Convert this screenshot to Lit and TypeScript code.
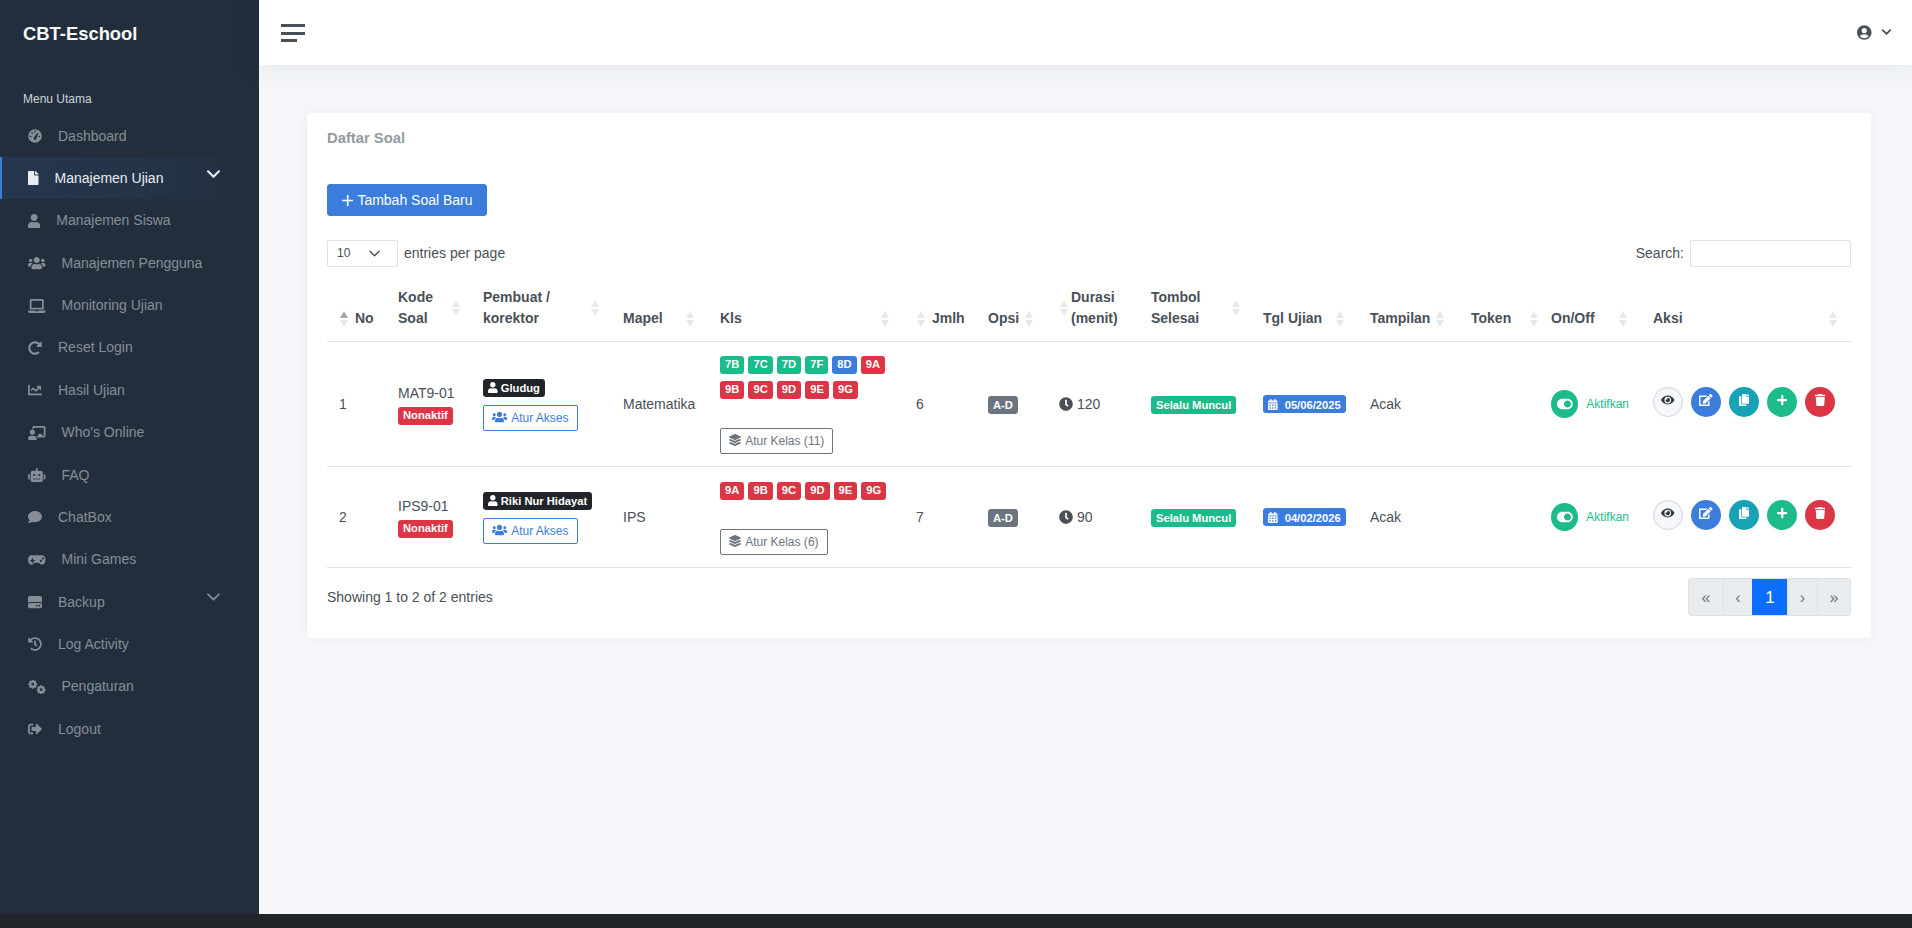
import { LitElement, html, css } from "lit";
import { customElement } from "lit/decorators.js";

const circle = (x: number, y: number, r: number) =>
  `M${x - r} ${y}a${r} ${r} 0 1 0 ${2 * r} 0a${r} ${r} 0 1 0 ${-2 * r} 0z`;

const gear = (cx: number, cy: number, r: number, hole: number) => {
  const pts: string[] = [];
  const teeth = 8;
  for (let i = 0; i < teeth; i++) {
    const a = (i / teeth) * Math.PI * 2;
    const w = Math.PI / teeth;
    [[-w * 0.95, r * 0.76], [-w * 0.45, r], [w * 0.45, r], [w * 0.95, r * 0.76]].forEach(([d, rr]) => {
      pts.push(`${(cx + Math.cos(a + d) * rr).toFixed(1)} ${(cy + Math.sin(a + d) * rr).toFixed(1)}`);
    });
  }
  return `M${pts.join("L")}z${circle(cx, cy, hole)}`;
};

const ICONS: Record<string, [number, string, boolean?]> = {
  gauge: [512, circle(256, 256, 250) + circle(100, 275, 30) + circle(150, 150, 30) + circle(256, 95, 30) + circle(412, 275, 30) + "M205 330L340 140L375 160L295 380A55 55 0 0 1 205 330z", true],
  file: [384, "M224 136V0H24C10.7 0 0 10.7 0 24v464c0 13.3 10.7 24 24 24h336c13.3 0 24-10.7 24-24V160H248c-13.2 0-24-10.8-24-24zm160-14.1v6.1H256V0h6.1c6.4 0 12.5 2.5 17 7l97.9 98c4.5 4.5 7 10.6 7 16.9z"],
  user: [448, "M224 256c70.7 0 128-57.3 128-128S294.7 0 224 0 96 57.3 96 128s57.3 128 128 128zm89.6 32h-16.7c-22.2 10.2-46.9 16-72.9 16s-50.6-5.8-72.9-16h-16.7C60.2 288 0 348.2 0 422.4V464c0 26.5 21.5 48 48 48h352c26.5 0 48-21.5 48-48v-41.6c0-74.2-60.2-134.4-134.4-134.4z"],
  users: [640, "M96 224c35.3 0 64-28.7 64-64s-28.7-64-64-64-64 28.7-64 64 28.7 64 64 64zm448 0c35.3 0 64-28.7 64-64s-28.7-64-64-64-64 28.7-64 64 28.7 64 64 64zm32 32h-64c-17.6 0-33.5 7.1-45.1 18.6 40.3 22.1 68.9 62 75.1 109.4h66c17.7 0 32-14.3 32-32v-32c0-35.3-28.7-64-64-64zm-256 0c61.9 0 112-50.1 112-112S381.9 32 320 32 208 82.1 208 144s50.1 112 112 112zm76.8 32h-8.3c-20.8 10-43.9 16-68.5 16s-47.6-6-68.5-16h-8.3C179.6 288 128 339.6 128 403.2V432c0 26.5 21.5 48 48 48h288c26.5 0 48-21.5 48-48v-28.8c0-63.6-51.6-115.2-115.2-115.2zm-223.7-13.4C161.5 263.1 145.6 256 128 256H64c-35.3 0-64 28.7-64 64v32c0 17.7 14.3 32 32 32h65.9c6.3-47.4 34.9-87.3 75.2-109.4z"],
  laptop: [640, "M624 416H381.54c-.74 19.81-14.71 32-32.74 32H288c-18.69 0-33.02-17.47-32.77-32H16c-8.8 0-16 7.2-16 16v16c0 35.2 28.8 64 64 64h512c35.2 0 64-28.8 64-64v-16c0-8.8-7.2-16-16-16zM576 48c0-26.4-21.6-48-48-48H112C85.6 0 64 21.6 64 48v336h512V48zm-64 272H128V64h384v256z"],
  redo: [512, "M256.455 8c66.269.119 126.437 26.233 170.859 68.685l35.715-35.715C478.149 25.851 504 36.559 504 57.941V192c0 13.255-10.745 24-24 24H345.941c-21.382 0-32.09-25.851-16.971-40.971l41.75-41.75c-30.864-28.899-70.801-44.907-113.23-45.273-92.398-.798-170.283 73.977-169.484 169.442C88.764 348.009 162.184 424 256 424c41.127 0 79.997-14.678 110.629-41.556 4.743-4.161 11.906-3.908 16.368.553l39.662 39.662c4.872 4.872 4.631 12.815-.482 17.433C378.202 479.813 319.926 504 256 504 119.034 504 8.001 392.967 8 256.002 7.999 119.193 119.646 7.755 256.455 8z"],
  chart: [512, "M496 384H64V80c0-8.84-7.16-16-16-16H16C7.16 64 0 71.16 0 80v336c0 17.67 14.33 32 32 32h464c8.84 0 16-7.16 16-16v-32c0-8.84-7.16-16-16-16zM464 96H345.94c-21.38 0-32.09 25.85-16.97 40.97l32.4 32.4L288 242.75l-73.37-73.37c-12.5-12.5-32.76-12.5-45.25 0l-68.69 68.69c-6.25 6.25-6.25 16.38 0 22.63l22.62 22.62c6.25 6.25 16.38 6.25 22.63 0L192 237.25l73.37 73.37c12.5 12.5 32.76 12.5 45.25 0l96-96 32.4 32.4c15.12 15.12 40.97 4.41 40.97-16.97V112c0-8.84-7.16-16-16-16z"],
  teacher: [640, "M208 352c-2.39 0-4.78.35-7.06 1.09C187.98 357.3 174.35 360 160 360c-14.35 0-27.98-2.7-40.95-6.91-2.28-.74-4.66-1.09-7.05-1.09C49.94 352-.33 402.48 0 464.62.14 490.88 21.73 512 48 512h224c26.27 0 47.86-21.12 48-47.38.33-62.14-49.94-112.62-112-112.62zm-48-32c53.02 0 96-42.98 96-96s-42.98-96-96-96-96 42.98-96 96 42.98 96 96 96zM592 0H208c-26.47 0-48 22.25-48 49.59V96c23.42 0 45.1 6.78 64 17.8V64h352v288h-64v-64H384v64h-76.24c19.1 16.69 33.12 38.73 39.69 64H592c26.47 0 48-22.25 48-49.59V49.59C640 22.25 618.47 0 592 0z"],
  robot: [640, "M32,224H64V416H32A31.96166,31.96166,0,0,1,0,384V256A31.96166,31.96166,0,0,1,32,224Zm512-48V448a64.06328,64.06328,0,0,1-64,64H160a64.06328,64.06328,0,0,1-64-64V176a79.974,79.974,0,0,1,80-80H288V32a32,32,0,0,1,64,0V96H464A79.974,79.974,0,0,1,544,176ZM264,256a40,40,0,1,0-40,40A39.997,39.997,0,0,0,264,256Zm-8,128H192v32h64Zm96,0H288v32h64ZM456,256a40,40,0,1,0-40,40A39.997,39.997,0,0,0,456,256Zm-8,128H384v32h64ZM640,256V384a31.96166,31.96166,0,0,1-32,32H576V224h32A31.96166,31.96166,0,0,1,640,256Z"],
  comment: [512, "M256 32C114.6 32 0 125.1 0 240c0 49.6 21.4 95 57 130.7C44.5 421.1 2.7 466 2.2 466.5c-2.2 2.3-2.8 5.7-1.5 8.7S4.8 480 8 480c66.3 0 116-31.8 140.6-51.4 32.7 12.3 69 19.4 107.4 19.4 141.4 0 256-93.1 256-208S397.4 32 256 32z"],
  gamepad: [640, "M130 80H510C590 80 640 150 640 250C640 360 590 432 510 432C460 432 430 395 400 360H240C210 395 180 432 130 432C50 432 0 360 0 250C0 150 50 80 130 80ZM250 268a12 12 0 0 0-12-12H190V208a12 12 0 0 0-12-12H150a12 12 0 0 0-12 12v48H90a12 12 0 0 0-12 12v24a12 12 0 0 0 12 12h48v48a12 12 0 0 0 12 12h28a12 12 0 0 0 12-12V304h48a12 12 0 0 0 12-12zM470 330a40 40 0 1 0 0-80 40 40 0 0 0 0 80zm70-90a40 40 0 1 0 0-80 40 40 0 0 0 0 80z", true],
  hdd: [512, "M0 96C0 60.7 28.7 32 64 32H448c35.3 0 64 28.7 64 64V280.4c-17-15.2-39.4-24.4-64-24.4H64c-24.6 0-47 9.2-64 24.4V96zM64 288H448c35.3 0 64 28.7 64 64v64c0 35.3-28.7 64-64 64H64c-35.3 0-64-28.7-64-64V352c0-35.3 28.7-64 64-64zM320 416a32 32 0 1 0 0-64 32 32 0 1 0 0 64zm128-32a32 32 0 1 0 -64 0 32 32 0 1 0 64 0z"],
  history: [512, "M504 255.531c.253 136.64-111.18 248.372-247.82 248.468-59.015.042-113.223-20.53-155.822-54.911-11.077-8.94-11.905-25.541-1.839-35.607l11.267-11.267c8.609-8.609 22.353-9.551 31.891-1.984C173.062 425.135 212.781 440 256 440c101.705 0 184-82.311 184-184 0-101.705-82.311-184-184-184-48.814 0-93.149 18.969-126.068 49.932l50.754 50.754c10.08 10.08 2.941 27.314-11.313 27.314H24c-8.837 0-16-7.163-16-16V38.627c0-14.254 17.234-21.393 27.314-11.314l49.372 49.372C129.209 34.136 189.552 8 256 8c136.81 0 247.747 110.78 248 247.531zm-180.912 78.784l9.823-12.63c8.138-10.463 6.253-25.542-4.21-33.679L288 256.349V152c0-13.255-10.745-24-24-24h-16c-13.255 0-24 10.745-24 24v135.651l65.409 50.874c10.463 8.137 25.541 6.253 33.679-4.21z"],
  cogs: [640, gear(175, 155, 165, 50) + gear(480, 355, 165, 50), true],
  logout: [512, "M497 273L329 441c-15 15-41 4.5-41-17v-96H152c-13.3 0-24-10.7-24-24v-96c0-13.3 10.7-24 24-24h136V88c0-21.4 25.9-32 41-17l168 168c9.3 9.4 9.3 24.6 0 34zM192 436v-40c0-6.6-5.4-12-12-12H96c-17.7 0-32-14.3-32-32V160c0-17.7 14.3-32 32-32h84c6.6 0 12-5.4 12-12V76c0-6.6-5.4-12-12-12H96c-53 0-96 43-96 96v192c0 53 43 96 96 96h84c6.6 0 12-5.4 12-12z"],
  plus: [448, "M416 208H272V64c0-17.67-14.33-32-32-32h-32c-17.67 0-32 14.33-32 32v144H32c-17.67 0-32 14.33-32 32v32c0 17.67 14.33 32 32 32h144v144c0 17.67 14.33 32 32 32h32c17.67 0 32-14.33 32-32V304h144c17.67 0 32-14.33 32-32v-32c0-17.67-14.33-32-32-32z"],
  thinplus: [448, "M192 36h64v188h188v64H256v188h-64V288H4v-64h188z"],
  clock: [512, "M256,8C119,8,8,119,8,256S119,504,256,504,504,393,504,256,393,8,256,8Zm92.49,313h0l-20,25a16,16,0,0,1-22.49,2.5h0l-67-49.72a40,40,0,0,1-15-31.23V112a16,16,0,0,1,16-16h32a16,16,0,0,1,16,16V256l58,42.5A16,16,0,0,1,348.49,321Z"],
  eye: [576, "M572.52 241.4C518.29 135.59 410.93 64 288 64S57.68 135.64 3.48 241.41a32.35 32.35 0 0 0 0 29.19C57.71 376.41 165.07 448 288 448s230.32-71.64 284.52-177.41a32.35 32.35 0 0 0 0-29.19zM288 400a144 144 0 1 1 144-144 143.93 143.93 0 0 1-144 144zm0-240a95.31 95.31 0 0 0-25.31 3.79 47.85 47.85 0 0 1-66.9 66.9A95.78 95.78 0 1 0 288 160z"],
  trash: [448, "M432 32H312l-9.4-18.7A24 24 0 0 0 281.1 0H166.8a23.72 23.72 0 0 0-21.4 13.3L136 32H16A16 16 0 0 0 0 48v32a16 16 0 0 0 16 16h416a16 16 0 0 0 16-16V48a16 16 0 0 0-16-16zM53.2 467a48 48 0 0 0 47.9 45h245.8a48 48 0 0 0 47.9-45L416 128H32z"],
  copy: [448, "M320 448v40c0 13.255-10.745 24-24 24H24c-13.255 0-24-10.745-24-24V120c0-13.255 10.745-24 24-24h72v296c0 30.879 25.121 56 56 56h168zm0-344V0H152c-13.255 0-24 10.745-24 24v368c0 13.255 10.745 24 24 24h272c13.255 0 24-10.745 24-24V128H344c-13.2 0-24-10.8-24-24zm120.971-31.029L375.029 7.029A24 24 0 0 0 358.059 0H352v96h96v-6.059a24 24 0 0 0-7.029-16.97z"],
  edit: [576, "M402.6 83.2l90.2 90.2c3.8 3.8 3.8 10 0 13.8L274.4 405.6l-92.8 10.3c-12.4 1.4-22.9-9.1-21.5-21.5l10.3-92.8L388.8 83.2c3.8-3.8 10-3.8 13.8 0zm162-22.9l-48.8-48.8c-15.2-15.2-39.9-15.2-55.2 0l-35.4 35.4c-3.8 3.8-3.8 10 0 13.8l90.2 90.2c3.8 3.8 10 3.8 13.8 0l35.4-35.4c15.2-15.3 15.2-40 0-55.2zM384 346.2V448H64V128h229.8c3.2 0 6.2-1.3 8.5-3.5l40-40c7.6-7.6 2.2-20.5-8.5-20.5H48C21.5 64 0 85.5 0 112v352c0 26.5 21.5 48 48 48h352c26.5 0 48-21.5 48-48V306.2c0-10.7-12.9-16-20.5-8.5l-40 40c-2.2 2.3-3.5 5.3-3.5 8.5z"],
  calendar: [448, "M0 464c0 26.5 21.5 48 48 48h352c26.5 0 48-21.5 48-48V192H0v272zm320-196c0-6.6 5.4-12 12-12h40c6.6 0 12 5.4 12 12v40c0 6.6-5.4 12-12 12h-40c-6.6 0-12-5.4-12-12v-40zm0 128c0-6.6 5.4-12 12-12h40c6.6 0 12 5.4 12 12v40c0 6.6-5.4 12-12 12h-40c-6.6 0-12-5.4-12-12v-40zM192 268c0-6.6 5.4-12 12-12h40c6.6 0 12 5.4 12 12v40c0 6.6-5.4 12-12 12h-40c-6.6 0-12-5.4-12-12v-40zm0 128c0-6.6 5.4-12 12-12h40c6.6 0 12 5.4 12 12v40c0 6.6-5.4 12-12 12h-40c-6.6 0-12-5.4-12-12v-40zM64 268c0-6.6 5.4-12 12-12h40c6.6 0 12 5.4 12 12v40c0 6.6-5.4 12-12 12H76c-6.6 0-12-5.4-12-12v-40zm0 128c0-6.6 5.4-12 12-12h40c6.6 0 12 5.4 12 12v40c0 6.6-5.4 12-12 12H76c-6.6 0-12-5.4-12-12v-40zM400 64h-48V16c0-8.8-7.2-16-16-16h-32c-8.8 0-16 7.2-16 16v48H160V16c0-8.8-7.2-16-16-16h-32c-8.8 0-16 7.2-16 16v48H48C21.5 64 0 85.5 0 112v48h448v-48c0-26.5-21.5-48-48-48z"],
  toggle: [576, "M384 64H192C86 64 0 150 0 256s86 192 192 192h192c106 0 192-86 192-192S490 64 384 64zm0 320c-70.8 0-128-57.3-128-128 0-70.8 57.3-128 128-128 70.8 0 128 57.3 128 128 0 70.8-57.3 128-128 128z"],
  layers: [512, "M12.41 148.02l232.94 105.67c6.8 3.09 14.49 3.09 21.29 0l232.94-105.67c16.55-7.51 16.55-32.52 0-40.03L266.65 2.31a25.607 25.607 0 0 0-21.29 0L12.41 107.98c-16.55 7.51-16.55 32.53 0 40.04zm487.18 88.28l-58.09-26.33-161.64 73.27c-7.56 3.43-15.59 5.17-23.86 5.17s-16.29-1.74-23.86-5.17L70.51 209.97l-58.1 26.33c-16.55 7.5-16.55 32.5 0 40l232.94 105.59c6.8 3.08 14.49 3.08 21.29 0L499.59 276.3c16.55-7.5 16.55-32.5 0-40zm0 127.8l-57.87-26.23-161.86 73.37c-7.56 3.43-15.59 5.17-23.86 5.17s-16.29-1.74-23.86-5.17L70.29 337.87 12.41 364.1c-16.55 7.5-16.55 32.5 0 40l232.94 105.59c6.8 3.08 14.49 3.08 21.29 0L499.59 404.1c16.55-7.5 16.55-32.5 0-40z"],
  usercircle: [496, "M248 8C111 8 0 119 0 256s111 248 248 248 248-111 248-248S385 8 248 8zm0 96c48.6 0 88 39.4 88 88s-39.4 88-88 88-88-39.4-88-88 39.4-88 88-88zm0 344c-58.7 0-111.3-26.6-146.5-68.2 18.8-35.4 55.6-59.8 98.5-59.8 2.4 0 4.8.4 7.1 1.1 13 4.2 26.6 6.9 40.9 6.9 14.3 0 28-2.7 40.9-6.9 2.3-.7 4.7-1.1 7.1-1.1 42.9 0 79.7 24.4 98.5 59.8C359.3 421.4 306.7 448 248 448z"],
};

const icon = (name: string, size = 14) => {
  const [vb, d, eo] = ICONS[name];
  return html`<svg class="ic" width=${(vb / 512) * size} height=${size} viewBox="0 0 ${vb} 512" fill="currentColor"><path d=${d} fill-rule=${eo ? "evenodd" : "nonzero"}></path></svg>`;
};

const chevron = (w: number, h: number, sw: number) =>
  html`<svg class="chev" width=${w} height=${h} viewBox="0 0 12 7" fill="none" stroke="currentColor" stroke-width=${sw} stroke-linecap="round" stroke-linejoin="round"><path d="M1 1l5 5 5-5"></path></svg>`;

const MENU = [
  { i: "gauge", t: "Dashboard" },
  { i: "file", t: "Manajemen Ujian", active: true, chev: true },
  { i: "user", t: "Manajemen Siswa" },
  { i: "users", t: "Manajemen Pengguna" },
  { i: "laptop", t: "Monitoring Ujian" },
  { i: "redo", t: "Reset Login" },
  { i: "chart", t: "Hasil Ujian" },
  { i: "teacher", t: "Who's Online" },
  { i: "robot", t: "FAQ" },
  { i: "comment", t: "ChatBox" },
  { i: "gamepad", t: "Mini Games" },
  { i: "hdd", t: "Backup", chev: true },
  { i: "history", t: "Log Activity" },
  { i: "cogs", t: "Pengaturan" },
  { i: "logout", t: "Logout" },
];

const COLS = [
  { l: ["No"], w: 59, ax: 13, pad: 28, sorted: true },
  { l: ["Kode", "Soal"], w: 85, ax: 66, pad: 12 },
  { l: ["Pembuat /", "korektor"], w: 140, ax: 120, pad: 12 },
  { l: ["Mapel"], w: 97, ax: 75, pad: 12 },
  { l: ["Kls"], w: 196, ax: 173, pad: 12 },
  { l: ["Jmlh"], w: 72, ax: 13, pad: 28 },
  { l: ["Opsi"], w: 71, ax: 49, pad: 12 },
  { l: ["Durasi", "(menit)"], w: 92, ax: 13, pad: 24 },
  { l: ["Tombol", "Selesai"], w: 112, ax: 93, pad: 12 },
  { l: ["Tgl Ujian"], w: 107, ax: 85, pad: 12 },
  { l: ["Tampilan"], w: 101, ax: 78, pad: 12 },
  { l: ["Token"], w: 80, ax: 71, pad: 12 },
  { l: ["On/Off"], w: 102, ax: 80, pad: 12 },
  { l: ["Aksi"], w: 210, ax: 188, pad: 12 },
];

const ROWS = [
  {
    no: 1, kode: "MAT9-01", by: "Gludug", mapel: "Matematika",
    kls: [["7B", "g"], ["7C", "g"], ["7D", "g"], ["7F", "g"], ["8D", "b"], ["9A", "r"], ["9B", "r"], ["9C", "r"], ["9D", "r"], ["9E", "r"], ["9G", "r"]],
    n: 11, jmlh: 6, dur: 120, tgl: "05/06/2025",
  },
  {
    no: 2, kode: "IPS9-01", by: "Riki Nur Hidayat", mapel: "IPS",
    kls: [["9A", "r"], ["9B", "r"], ["9C", "r"], ["9D", "r"], ["9E", "r"], ["9G", "r"]],
    n: 6, jmlh: 7, dur: 90, tgl: "04/02/2026",
  },
];

@customElement("app-root")
export class AppRoot extends LitElement {
  static styles = css`
    :host {
      display: grid;
      grid-template-rows: 914px 14px;
      height: 928px;
      overflow: hidden;
      font-family: "Liberation Sans", Arial, sans-serif;
      font-size: 14px;
      line-height: 21px;
      color: #495057;
      background: #f5f7fb;
    }
    .ic { display: inline-block; vertical-align: -2px; flex: none; }
    .wrap { display: grid; grid-template-columns: 259px 1fr; min-height: 0; }
    .foot { background: #212529; }

    .side { background: #222e3c; color: rgba(233, 236, 239, 0.5); }
    .brand { font-size: 18.4px; font-weight: 700; color: #f8f9fa; padding: 23px 23px 0; line-height: 22px; }
    .menu-h { font-size: 12px; color: #ced4da; padding: 44px 23px 0; line-height: 20px; margin-bottom: 6px; }
    .item { display: flex; align-items: center; gap: 16px; height: 42.36px; padding-left: 26px; border-left: 2px solid transparent; position: relative; }
    .item.active { color: #e9ecef; border-left-color: #3b7ddd; background: linear-gradient(90deg, rgba(59, 125, 221, 0.1), rgba(59, 125, 221, 0.0875) 50%, rgba(0, 0, 0, 0)); height: 42px; margin-bottom: 0.36px; }
    .item .chev { position: absolute; left: 205px; top: 12.5px; }

    .main { display: flex; flex-direction: column; min-width: 0; }
    .top { height: 65px; background: #fff; box-shadow: 0 0 32px 0 rgba(33, 37, 41, 0.1); display: flex; align-items: center; justify-content: space-between; padding: 0 21px 0 22px; flex: none; position: relative; }
    .burger { display: flex; flex-direction: column; gap: 4.5px; margin-top: 1px; }
    .burger i { display: block; width: 24px; height: 3px; background: #495057; }
    .burger i:last-child { width: 16px; }
    .acct { display: flex; align-items: center; gap: 10px; margin-top: -1px; }

    .content { padding: 48px 41px 0 48px; }
    .card { background: #fff; border-radius: 4px; box-shadow: 0 0 14px 0 rgba(33, 37, 41, 0.05); padding: 15px 20px 22px; height: 525px; box-sizing: border-box; }
    .title { font-weight: 700; font-size: 14.8px; color: #939ba2; }
    .add { display: inline-flex; align-items: center; gap: 4px; margin-top: 35px; height: 32px; padding: 0 13px 0 14px; box-sizing: border-box; background: #3b7ddd; color: #fff; border: 1px solid #3b7ddd; border-radius: 3px; font: inherit; }
    .tools { display: flex; justify-content: space-between; align-items: center; margin-top: 24px; height: 27px; }
    .tools > div { display: flex; align-items: center; gap: 6px; }
    .sel { width: 71px; height: 27px; box-sizing: border-box; border: 1px solid #dee2e6; border-radius: 2px; display: flex; align-items: center; justify-content: space-between; padding: 0 17px 0 9px; font-size: 12px; }
    input { width: 161px; height: 27px; box-sizing: border-box; border: 1px solid #dee2e6; border-radius: 2px; background: #fff; padding: 0 8px; margin: 0; font: inherit; outline: none; }

    table { table-layout: fixed; border-collapse: separate; border-spacing: 0; width: 1524px; margin-top: 16px; }
    th { font-weight: 700; text-align: left; vertical-align: bottom; padding: 4px 0 12px; border-bottom: 1px solid #dee2e6; }
    th .lab { display: block; position: relative; }
    .sort { position: absolute; top: 50%; margin-top: -8px; display: block; }
    .sort .off { fill: #e6e8ea; }
    .sort .on { fill: #a4a8ad; }
    td { padding: 12px; vertical-align: middle; border-bottom: 1px solid #dee2e6; }
    td.kls { padding-top: 14px; }
    tr:last-child td.kls { padding-top: 15px; }

    .badge { display: inline-block; font-size: 11.2px; font-weight: 700; line-height: 1; padding: 3.36px 5.04px; border-radius: 3.2px; color: #fff; white-space: nowrap; box-sizing: border-box; height: 18px; }
    .badge .ic { vertical-align: -1px; }
    .g { background: #1cbb8c; }
    .b { background: #3b7ddd; }
    .r { background: #dc3545; }
    .k { background: #212529; }
    .s { background: #6c757d; }
    .stack { display: flex; flex-direction: column; align-items: flex-start; }
    .stack .badge + .btn { margin-top: 8px; }
    .by { margin-top: 2px; }
    .kode .badge { margin-top: 3px; }
    .btn { display: inline-block; font-size: 12px; line-height: 18px; padding: 3px 8px; box-sizing: border-box; height: 26px; border: 1px solid; border-radius: 2px; white-space: nowrap; background: #fff; }
    .btn .ic { vertical-align: -1px; margin-right: 1.5px; }
    .btn.blue { color: #3b7ddd; border-color: #3b7ddd; }
    .btn.gray { color: #6c757d; border-color: #6c757d; }
    .chips { display: flex; flex-wrap: wrap; gap: 7px 4px; margin-bottom: 29px; }
    .tog { display: flex; align-items: center; gap: 8px; color: #1cbb8c; font-size: 12px; }
    .tog span { width: 28px; height: 28px; border-radius: 50%; background: #1cbb8c; color: #fff; display: flex; align-items: center; justify-content: center; }
    .acts { display: flex; gap: 8px; margin-bottom: 4px; }
    .acts span { width: 30px; height: 30px; box-sizing: border-box; border-radius: 50%; color: #fff; display: flex; align-items: center; justify-content: center; padding-bottom: 4px; }
    .acts .v { background: #f5f7fb; border: 1px solid #ced4da; color: #343a40; }
    .acts .e { background: #3b7ddd; }
    .acts .c { background: #17a2b8; }
    .acts .p { background: #1cbb8c; }
    .acts .d { background: #dc3545; }
    .date .ic { margin-right: 7px; }

    .tfoot { display: flex; justify-content: space-between; align-items: center; margin-top: 10px; height: 38px; }
    .pager { display: flex; height: 38px; box-sizing: border-box; border: 1px solid #dee2e6; border-radius: 3px; overflow: hidden; color: #6c757d; background: #e9ecef; font-size: 16px; }
    .pager span { display: flex; align-items: center; justify-content: center; border-left: 1px solid #dee2e6; box-sizing: border-box; }
    .pager span:first-child { border-left: 0; }
    .pager .on { background: #0d6efd; color: #fff; border-color: #0d6efd; font-size: 17px; }
  `;

  private sortIcon(c: (typeof COLS)[number]) {
    return html`<svg class="sort" width="8" height="16" viewBox="0 0 8 16" style="left:${c.ax - c.pad}px">
      <polygon class=${c.sorted ? "on" : "off"} points="0,7 4,0 8,7"></polygon>
      <polygon class="off" points="0,9 8,9 4,16"></polygon>
    </svg>`;
  }

  render() {
    const pageW = [34, 29, 35, 30, 33];
    return html`
      <div class="wrap">
        <nav class="side">
          <div class="brand">CBT-Eschool</div>
          <div class="menu-h">Menu Utama</div>
          ${MENU.map(
            (m) => html`<div class="item ${m.active ? "active" : ""}">
              ${icon(m.i)}<span>${m.t}</span>${m.chev ? chevron(13, 8, m.active ? 2 : 1.6) : ""}
            </div>`
          )}
        </nav>
        <div class="main">
          <header class="top">
            <div class="burger"><i></i><i></i><i></i></div>
            <div class="acct">${icon("usercircle", 15)}${chevron(9, 6, 2.4)}</div>
          </header>
          <div class="content">
            <section class="card">
              <div class="title">Daftar Soal</div>
              <button class="add">${icon("thinplus", 13)}Tambah Soal Baru</button>
              <div class="tools">
                <div>
                  <div class="sel"><span>10</span>${chevron(11, 7, 1.5)}</div>
                  <span>entries per page</span>
                </div>
                <div><span>Search:</span><input type="search" /></div>
              </div>
              <table>
                <colgroup>${COLS.map((c) => html`<col style="width:${c.w}px" />`)}</colgroup>
                <thead>
                  <tr>
                    ${COLS.map(
                      (c) => html`<th style="padding-left:${c.pad}px">
                        <span class="lab">${c.l.map((t, i) => html`${i ? html`<br />` : ""}${t}`)}${this.sortIcon(c)}</span>
                      </th>`
                    )}
                  </tr>
                </thead>
                <tbody>
                  ${ROWS.map(
                    (r) => html`<tr>
                      <td>${r.no}</td>
                      <td><div class="stack kode"><span>${r.kode}</span><span class="badge r">Nonaktif</span></div></td>
                      <td><div class="stack by">
                        <span class="badge k">${icon("user", 11)} ${r.by}</span>
                        <span class="btn blue">${icon("users", 12)} Atur Akses</span>
                      </div></td>
                      <td>${r.mapel}</td>
                      <td class="kls">
                        <div class="chips">${r.kls.map(([t, c]) => html`<span class="badge ${c}">${t}</span>`)}</div>
                        <span class="btn gray">${icon("layers", 12)} Atur Kelas (${r.n})</span>
                      </td>
                      <td>${r.jmlh}</td>
                      <td><span class="badge s">A-D</span></td>
                      <td>${icon("clock")} ${r.dur}</td>
                      <td><span class="badge g">Selalu Muncul</span></td>
                      <td><span class="badge b date">${icon("calendar", 11)}${r.tgl}</span></td>
                      <td>Acak</td>
                      <td></td>
                      <td><div class="tog"><span>${icon("toggle")}</span>Aktifkan</div></td>
                      <td><div class="acts">
                        <span class="v">${icon("eye", 12)}</span>
                        <span class="e">${icon("edit", 12)}</span>
                        <span class="c">${icon("copy", 12)}</span>
                        <span class="p">${icon("plus", 12)}</span>
                        <span class="d">${icon("trash", 12)}</span>
                      </div></td>
                    </tr>`
                  )}
                </tbody>
              </table>
              <div class="tfoot">
                <span>Showing 1 to 2 of 2 entries</span>
                <div class="pager">
                  ${["«", "‹", "1", "›", "»"].map(
                    (t, i) => html`<span class=${i === 2 ? "on" : ""} style="width:${pageW[i]}px">${t}</span>`
                  )}
                </div>
              </div>
            </section>
          </div>
        </div>
      </div>
      <div class="foot"></div>
    `;
  }
}
